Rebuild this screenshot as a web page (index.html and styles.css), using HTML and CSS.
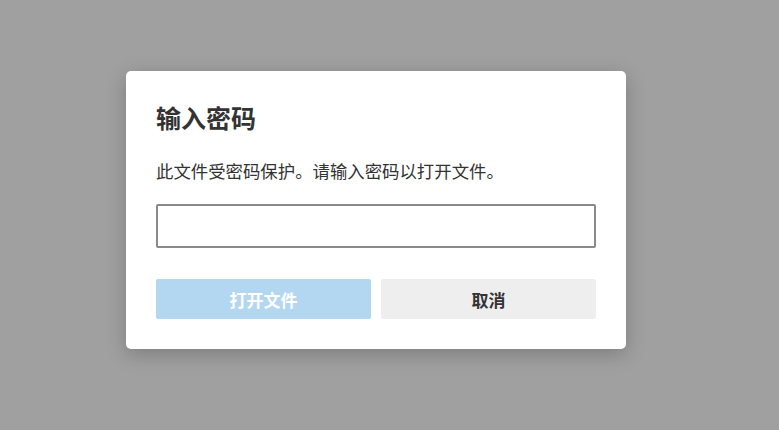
FILE: index.html
```html
<!DOCTYPE html>
<html lang="zh">
<head>
<meta charset="utf-8">
<link rel="stylesheet" href="styles.css">
</head>
<body>
<div class="overlay">
  <div class="dialog">
    <h1 class="title">输入密码</h1>
    <p class="desc">此文件受密码保护。请输入密码以打开文件。</p>
    <input class="field" type="password">
    <div class="actions">
      <button class="btn btn-primary">打开文件</button>
      <button class="btn btn-cancel">取消</button>
    </div>
  </div>
</div>
</body>
</html>
```
FILE: styles.css
```css
html, body {
  margin: 0;
  padding: 0;
  height: 100%;
}
body {
  background: #a0a0a0;
  font-family: "Liberation Sans", "Noto Sans CJK SC", sans-serif;
  color: #333;
}
.overlay {
  padding-top: 71px;
  padding-left: 126px;
}
.dialog {
  width: 440px;
  padding: 30px;
  background: #fff;
  border-radius: 5px;
  box-shadow: 0 5px 20px rgba(0, 0, 0, 0.22);
}
.title {
  margin: 0 0 23px;
  font-size: 25px;
  line-height: 36px;
  font-weight: 700;
  color: #333;
}
.desc {
  margin: 0 0 20px;
  font-size: 17.4px;
  line-height: 24px;
  color: #333;
}
.field {
  display: block;
  box-sizing: border-box;
  width: 440px;
  height: 44px;
  margin: 0 0 31px;
  border: 2px solid #8a8a8a;
  border-radius: 2px;
  background: #fff;
  outline: none;
}
.actions {
  display: flex;
  gap: 10px;
}
.btn {
  flex: 1;
  height: 40px;
  border: none;
  border-radius: 2px;
  font-family: inherit;
  font-size: 17px;
  font-weight: 700;
}
.btn-primary {
  background: #b4d7f1;
  color: #fff;
}
.btn-cancel {
  background: #eeeeee;
  color: #333;
}
```
